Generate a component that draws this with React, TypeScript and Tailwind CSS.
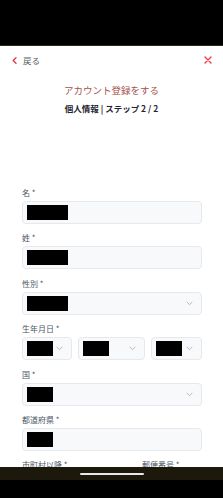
import React from "react";

const font = { fontFamily: '"Noto Sans CJK JP", "Noto Sans", sans-serif' };

function Chevron() {
  return (
    <svg width="7" height="5" viewBox="0 0 7 5" fill="none">
      <path d="M1 1.2 L3.5 3.6 L6 1.2" stroke="#aab3c2" strokeWidth="0.9" strokeLinecap="round" strokeLinejoin="round" />
    </svg>
  );
}

function Label({ children }: { children: React.ReactNode }) {
  return <div className="h-[12px] text-[8px] leading-[12px] text-[#4b5563]">{children}</div>;
}

function Box({ w, select, className = "" }: { w: number; select?: boolean; className?: string }) {
  return (
    <div className={`h-[23px] rounded-[4px] border border-[#e6e8ee] bg-[#f8f9fb] flex items-center pl-[4px] pr-[8px] ${className}`}>
      <div className="h-[15px] bg-black" style={{ width: w }} />
      <div className="flex-1" />
      {select && <Chevron />}
    </div>
  );
}

export default function App() {
  return (
    <div className="relative h-[498px] w-[223px] overflow-hidden bg-white" style={font}>
      <div className="h-[46px] bg-black border-b border-[#2e2c14]" />
      <div className="flex h-[28px] items-center justify-between pl-[12px] pr-[11px]">
        <div className="flex items-center gap-[6px]">
          <svg width="5" height="7" viewBox="0 0 5 7" fill="none">
            <path d="M4 0.8 L1.2 3.5 L4 6.2" stroke="#e8333f" strokeWidth="1.3" strokeLinecap="round" strokeLinejoin="round" />
          </svg>
          <span className="text-[8.5px] leading-none text-[#555b66]">戻る</span>
        </div>
        <svg width="8" height="8" viewBox="0 0 8 8" fill="none">
          <path d="M1 1 L7 7 M7 1 L1 7" stroke="#ef3a4a" strokeWidth="1.4" strokeLinecap="round" />
        </svg>
      </div>
      <div className="mt-[9px] flex flex-col items-center">
        <div className="text-[9.5px] leading-[14px] text-[#a4524c]">アカウント登録をする</div>
        <div className="mt-[5px] text-[8.5px] leading-[12px] font-bold text-[#1f2430]">個人情報 | ステップ 2 / 2</div>
      </div>
      <div className="mt-[73px] flex flex-col gap-[8.4px] pl-[22px] pr-[21px]">
        <div className="flex flex-col gap-[2px]">
          <Label>名 *</Label>
          <Box w={41} />
        </div>
        <div className="flex flex-col gap-[2px]">
          <Label>姓 *</Label>
          <Box w={41} />
        </div>
        <div className="flex flex-col gap-[2px]">
          <Label>性別 *</Label>
          <Box w={41} select />
        </div>
        <div className="flex flex-col gap-[2px]">
          <Label>生年月日 *</Label>
          <div className="flex gap-[6px]">
            <Box w={26} select className="w-[50px]" />
            <Box w={26} select className="flex-1" />
            <Box w={26} select className="w-[51px]" />
          </div>
        </div>
        <div className="flex flex-col gap-[2px]">
          <Label>国 *</Label>
          <Box w={26} select />
        </div>
        <div className="flex flex-col gap-[2px]">
          <Label>都道府県 *</Label>
          <Box w={26} />
        </div>
        <div className="flex gap-[6px]">
          <div className="flex-1 flex flex-col gap-[2px]">
            <Label>市町村以降 *</Label>
            <Box w={26} />
          </div>
          <div className="w-[60px] flex flex-col gap-[2px]">
            <Label>郵便番号 *</Label>
            <Box w={26} />
          </div>
        </div>
      </div>
      <div className="absolute bottom-0 left-0 right-0 h-[31px] flex flex-col">
        <div className="h-[13px] bg-[#1c190c] flex items-center justify-center">
          <div className="h-[2px] w-[64px] rounded-full bg-[#e8e8e8]" />
        </div>
        <div className="flex-1 bg-black" />
      </div>
    </div>
  );
}
